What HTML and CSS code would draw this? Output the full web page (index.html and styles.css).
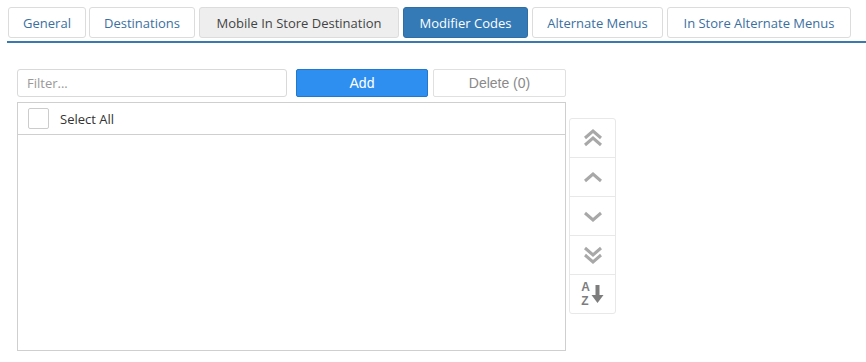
FILE: index.html
```html
<!DOCTYPE html>
<html>
<head>
<meta charset="utf-8">
<link rel="stylesheet" href="styles.css">
</head>
<body>
<div class="tabs">
  <div class="tab tab-general">General</div>
  <div class="tab tab-dest">Destinations</div>
  <div class="tab tab-mobile">Mobile In Store Destination</div>
  <div class="tab tab-active">Modifier Codes</div>
  <div class="tab tab-alt">Alternate Menus</div>
  <div class="tab tab-instore">In Store Alternate Menus</div>
</div>
<div class="content">
  <div class="toolbar">
    <input class="filter" type="text" placeholder="Filter...">
    <button class="btn btn-add">Add</button>
    <button class="btn btn-delete">Delete (0)</button>
  </div>
  <div class="lower">
    <div class="list">
      <div class="list-head">
        <span class="check"></span>
        <span class="select-all">Select All</span>
      </div>
    </div>
    <div class="side">
      <div class="side-btn">
        <svg width="22" height="22" viewBox="0 0 22 22"><path d="M3 11 L11 4 L19 11 M3 18 L11 11 L19 18" fill="none" stroke="#a8a8a8" stroke-width="3"/></svg>
      </div>
      <div class="side-btn">
        <svg width="22" height="22" viewBox="0 0 22 22"><path d="M3 15 L11 8 L19 15" fill="none" stroke="#a8a8a8" stroke-width="3"/></svg>
      </div>
      <div class="side-btn">
        <svg width="22" height="22" viewBox="0 0 22 22"><path d="M3 8 L11 15 L19 8" fill="none" stroke="#a8a8a8" stroke-width="3"/></svg>
      </div>
      <div class="side-btn">
        <svg width="22" height="22" viewBox="0 0 22 22"><path d="M3 4 L11 11 L19 4 M3 11 L11 18 L19 11" fill="none" stroke="#a8a8a8" stroke-width="3"/></svg>
      </div>
      <div class="side-btn sort">
        <span class="az"><span>A</span><span>Z</span></span>
        <svg width="13" height="22" viewBox="0 0 13 22"><path d="M6.5 2 V15" stroke="#7d7d7d" stroke-width="4"/><path d="M0.5 12 L6.5 20 L12.5 12 Z" fill="#7d7d7d"/></svg>
      </div>
    </div>
  </div>
</div>
</body>
</html>
```

FILE: styles.css
```css
* { box-sizing: border-box; }
body {
  margin: 0;
  background: #fff;
  font-family: "Open Sans", "Noto Sans", sans-serif;
  font-size: 13px;
  color: #333;
}
.tabs {
  display: flex;
  margin: 7px 0 0 7px;
  padding-left: 1px;
  border-bottom: 2px solid #3a78ad;
  padding-bottom: 3px;
}
.tab {
  height: 31px;
  display: flex;
  align-items: center;
  justify-content: center;
  border: 1px solid #dcdcdc;
  border-radius: 3px;
  color: #3b6f9f;
  background: #fff;
  margin-right: 4px;
}
.tab-general { width: 78px; margin-right: 3px; }
.tab-dest { width: 106px; }
.tab-mobile { width: 200px; background: #eeeeee; color: #444; }
.tab-active { width: 125px; background: #337ab7; border-color: #2e6ea5; color: #fff; }
.tab-alt { width: 131px; }
.tab-instore { width: 184px; }
.content {
  padding: 26px 0 0 17px;
}
.toolbar {
  display: flex;
  width: 549px;
  height: 28px;
}
.filter {
  width: 270px;
  height: 28px;
  margin: 0 9px 0 0;
  border: 1px solid #d9d9d9;
  border-radius: 3px;
  padding: 0 9px;
  font-family: "Open Sans", "Noto Sans", sans-serif;
  font-size: 13px;
  color: #333;
  outline: none;
}
.filter::placeholder { color: #999; }
.btn {
  height: 28px;
  border-radius: 2px;
  font-family: "Liberation Sans", Arial, sans-serif;
  font-size: 14px;
  padding: 0;
}
.btn-add {
  width: 132px;
  margin-right: 5px;
  background: #2f8ff0;
  border: 1px solid #2478cc;
  color: #fff;
}
.btn-delete {
  width: 133px;
  background: #fff;
  border: 1px solid #e0e0e0;
  color: #8a8a8a;
}
.lower {
  display: flex;
  align-items: flex-start;
  margin-top: 5px;
}
.list {
  width: 549px;
  height: 249px;
  border: 1px solid #cfcfcf;
}
.list-head {
  height: 32px;
  border-bottom: 1px solid #cfcfcf;
  display: flex;
  align-items: center;
  padding-left: 10px;
}
.check {
  width: 21px;
  height: 21px;
  border: 1px solid #cccccc;
  border-radius: 2px;
  margin-right: 11px;
}
.select-all { color: #333; font-size: 13px; }
.side {
  margin: 16px 0 0 3px;
  width: 47px;
  border: 1px solid #e8e8e8;
  border-radius: 3px;
}
.side-btn {
  height: 39px;
  display: flex;
  align-items: center;
  justify-content: center;
  border-bottom: 1px solid #e8e8e8;
}
.side-btn:last-child { border-bottom: none; height: 38px; }
.sort { gap: 1px; }
.az {
  display: flex;
  flex-direction: column;
  font-family: "Liberation Sans", Arial, sans-serif;
  font-weight: bold;
  font-size: 12px;
  line-height: 14px;
  color: #7d7d7d;
}
```
